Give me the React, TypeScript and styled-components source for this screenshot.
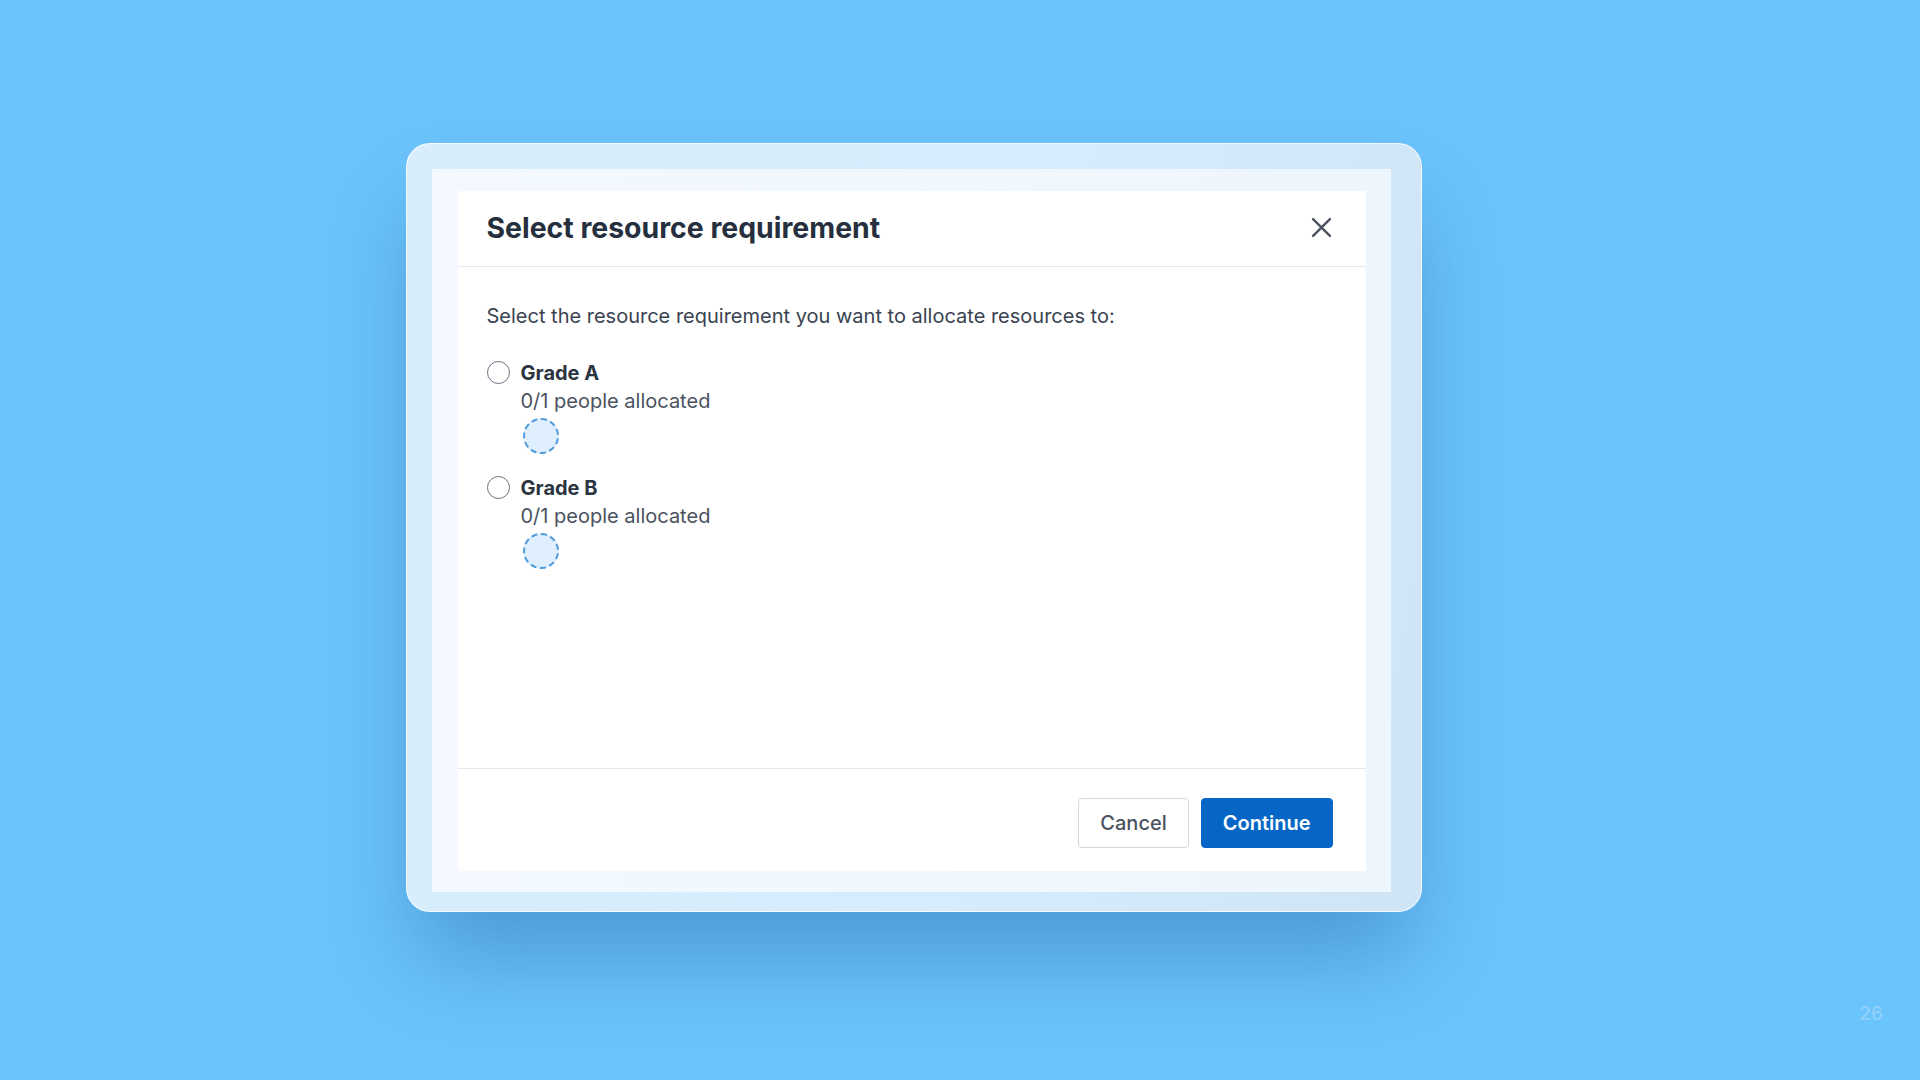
import React from "react";
import styled, { createGlobalStyle } from "styled-components";

const Global = createGlobalStyle`
  html, body { margin: 0; padding: 0; }
  body {
    background: #6cc4fc;
    font-family: Inter, "Noto Sans", "Liberation Sans", sans-serif;
    -webkit-font-smoothing: antialiased;
  }
`;

const Stage = styled.div`
  position: relative;
  width: 1920px;
  height: 1080px;
  overflow: hidden;
  background: #6cc4fc;
  box-sizing: border-box;
  padding: 143px 0 0 406px;
  display: flex;
  align-items: flex-start;
`;

const Frame = styled.div`
  box-sizing: border-box;
  width: 1016px;
  height: 769px;
  border-radius: 24px;
  border: 1.5px solid rgba(255, 255, 255, 0.75);
  background: linear-gradient(100deg, #d9eefd 0%, #d6ebfb 60%, #cfe4f5 100%);
  box-shadow: 0 55px 90px -10px rgba(25, 85, 150, 0.38);
  padding: 24.5px 30.5px 19.5px 24.5px;
  display: flex;
`;

const Inner = styled.div`
  flex: 1;
  background: linear-gradient(90deg, #f3f9fe 0%, #eef6fd 100%);
  padding: 22px 25px 21px 26px;
  display: flex;
`;

const Dialog = styled.div`
  flex: 1;
  background: #ffffff;
  display: flex;
  flex-direction: column;
`;

const Header = styled.div`
  height: 76px;
  box-sizing: border-box;
  border-bottom: 1.5px solid #e6e8eb;
  display: flex;
  align-items: center;
  justify-content: space-between;
  padding: 0 32px 2px 29px;
`;

const Title = styled.h1`
  margin: 0;
  font-size: 28.4px;
  font-weight: 700;
  color: #252f3e;
`;

const CloseButton = styled.button`
  border: 0;
  background: transparent;
  padding: 0;
  width: 24px;
  height: 24px;
  display: flex;
  align-items: center;
  justify-content: center;
  cursor: pointer;
`;

const Body = styled.div`
  flex: 1;
  padding: 35px 29px 0 29px;
  display: flex;
  flex-direction: column;
`;

const Intro = styled.p`
  margin: 0 0 29px 0;
  font-size: 20px;
  line-height: 28px;
  color: #3a4351;
`;

const Options = styled.div`
  display: flex;
  flex-direction: column;
  gap: 20px;
`;

const Option = styled.label`
  display: grid;
  grid-template-columns: 23px 1fr;
  column-gap: 11px;
  cursor: pointer;
`;

const Radio = styled.span`
  box-sizing: border-box;
  width: 23px;
  height: 23px;
  margin-top: 2px;
  border-radius: 50%;
  border: 1.7px solid #6b7280;
  background: #fff;
`;

const OptionText = styled.div`
  display: flex;
  flex-direction: column;
`;

const OptionName = styled.span`
  font-size: 20px;
  line-height: 28px;
  font-weight: 700;
  color: #2b3441;
`;

const OptionMeta = styled.span`
  font-size: 20px;
  line-height: 28px;
  color: #4a5260;
`;

const Slot = styled.span`
  box-sizing: border-box;
  margin: 3px 0 0 2px;
  width: 36px;
  height: 36px;
  border-radius: 50%;
  border: 2px dashed #4f9cdc;
  background: #e0effd;
`;

const Footer = styled.div`
  height: 103px;
  box-sizing: border-box;
  border-top: 1.5px solid #e6e8eb;
  display: flex;
  justify-content: flex-end;
  align-items: flex-start;
  gap: 12px;
  padding: 29px 33px 0 0;
`;

const Button = styled.button<{ $primary?: boolean }>`
  box-sizing: border-box;
  height: 50px;
  padding: 0 ${(p) => (p.$primary ? "21px" : "21px")};
  border-radius: 4px;
  font-family: Inter, "Noto Sans", "Liberation Sans", sans-serif;
  font-size: 20px;
  font-weight: ${(p) => (p.$primary ? 600 : 500)};
  cursor: pointer;
  border: 1.5px solid ${(p) => (p.$primary ? "#0566c6" : "#d3d6db")};
  background: ${(p) => (p.$primary ? "#0566c6" : "#ffffff")};
  color: ${(p) => (p.$primary ? "#ffffff" : "#4b5260")};
`;

const PageNumber = styled.span`
  position: absolute;
  right: 37px;
  top: 1002px;
  font-size: 19px;
  color: rgba(255, 255, 255, 0.25);
  font-weight: 500;
`;

const options = [
  { name: "Grade A", meta: "0/1 people allocated" },
  { name: "Grade B", meta: "0/1 people allocated" },
];

export default function App() {
  return (
    <>
      <Global />
      <Stage>
        <Frame>
          <Inner>
            <Dialog>
              <Header>
                <Title>Select resource requirement</Title>
                <CloseButton aria-label="Close">
                  <svg width="21" height="21" viewBox="0 0 20 20" fill="none">
                    <path d="M2 2 L18 18 M18 2 L2 18" stroke="#4b5260" strokeWidth="2.3" strokeLinecap="round" />
                  </svg>
                </CloseButton>
              </Header>
              <Body>
                <Intro>Select the resource requirement you want to allocate resources to:</Intro>
                <Options>
                  {options.map((o) => (
                    <Option key={o.name}>
                      <Radio />
                      <OptionText>
                        <OptionName>{o.name}</OptionName>
                        <OptionMeta>{o.meta}</OptionMeta>
                        <Slot />
                      </OptionText>
                    </Option>
                  ))}
                </Options>
              </Body>
              <Footer>
                <Button>Cancel</Button>
                <Button $primary>Continue</Button>
              </Footer>
            </Dialog>
          </Inner>
        </Frame>
        <PageNumber>26</PageNumber>
      </Stage>
    </>
  );
}
